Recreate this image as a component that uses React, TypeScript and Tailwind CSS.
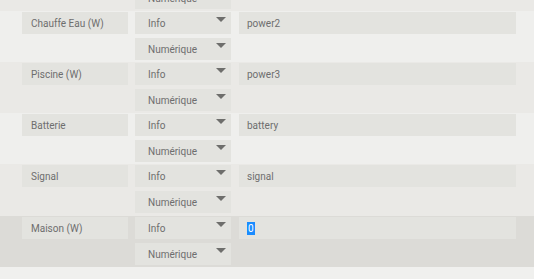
import React from 'react';

type Row = { label: string; value: string; active?: boolean; selected?: boolean };

const rows: Row[] = [
  { label: 'Consommation (W)', value: 'power1' },
  { label: 'Chauffe Eau (W)', value: 'power2' },
  { label: 'Piscine (W)', value: 'power3' },
  { label: 'Batterie', value: 'battery' },
  { label: 'Signal', value: 'signal' },
  { label: 'Maison (W)', value: '0', active: true, selected: true },
];

const Caret: React.FC = () => (
  <svg className="absolute right-[5px] top-[5px]" width="10" height="5" viewBox="0 0 10 5">
    <path d="M0 0h10L5 5z" fill="#6e6e6c" />
  </svg>
);

const Select: React.FC<{ text: string }> = ({ text }) => (
  <div className="relative w-[96px] h-[22px] bg-[#e3e3df] pl-[13px] flex items-center">
    <span>{text}</span>
    <Caret />
  </div>
);

const CmdRow: React.FC<{ row: Row; dark: boolean; last: boolean }> = ({ row, dark, last }) => (
  <div
    className={`flex pl-[22px] pr-[18px] pt-[1px] ${last ? 'pb-[3px]' : 'pb-[2px]'} ${
      row.active ? 'bg-[#dcdbd7]' : dark ? 'bg-[#eae9e6]' : 'bg-[#efefed]'
    }`}
  >
    <div className="w-[106px] h-[22px] bg-[#e3e3df] pl-[9px] flex items-center">{row.label}</div>
    <div className="ml-[7px] flex flex-col gap-[4px]">
      <Select text="Info" />
      <Select text="Numérique" />
    </div>
    <div className="ml-[8px] flex-1 h-[22px] bg-[#e3e3df] pl-[8px] flex items-center">
      {row.selected ? (
        <span className="bg-[#1a8cff] text-white leading-[13px] px-[1px]">{row.value}</span>
      ) : (
        row.value
      )}
    </div>
  </div>
);

export default function App() {
  return (
    <div
      className="w-[534px] h-[279px] overflow-hidden bg-[#f0f0ee] text-[10px] text-[#6e6e6e]"
      style={{ fontFamily: 'Roboto, "Liberation Sans", sans-serif' }}
    >
      <div className="-mt-[40px]">
        {rows.map((r, i) => (
          <CmdRow key={r.label} row={r} dark={i % 2 === 0} last={i === 4} />
        ))}
      </div>
    </div>
  );
}
